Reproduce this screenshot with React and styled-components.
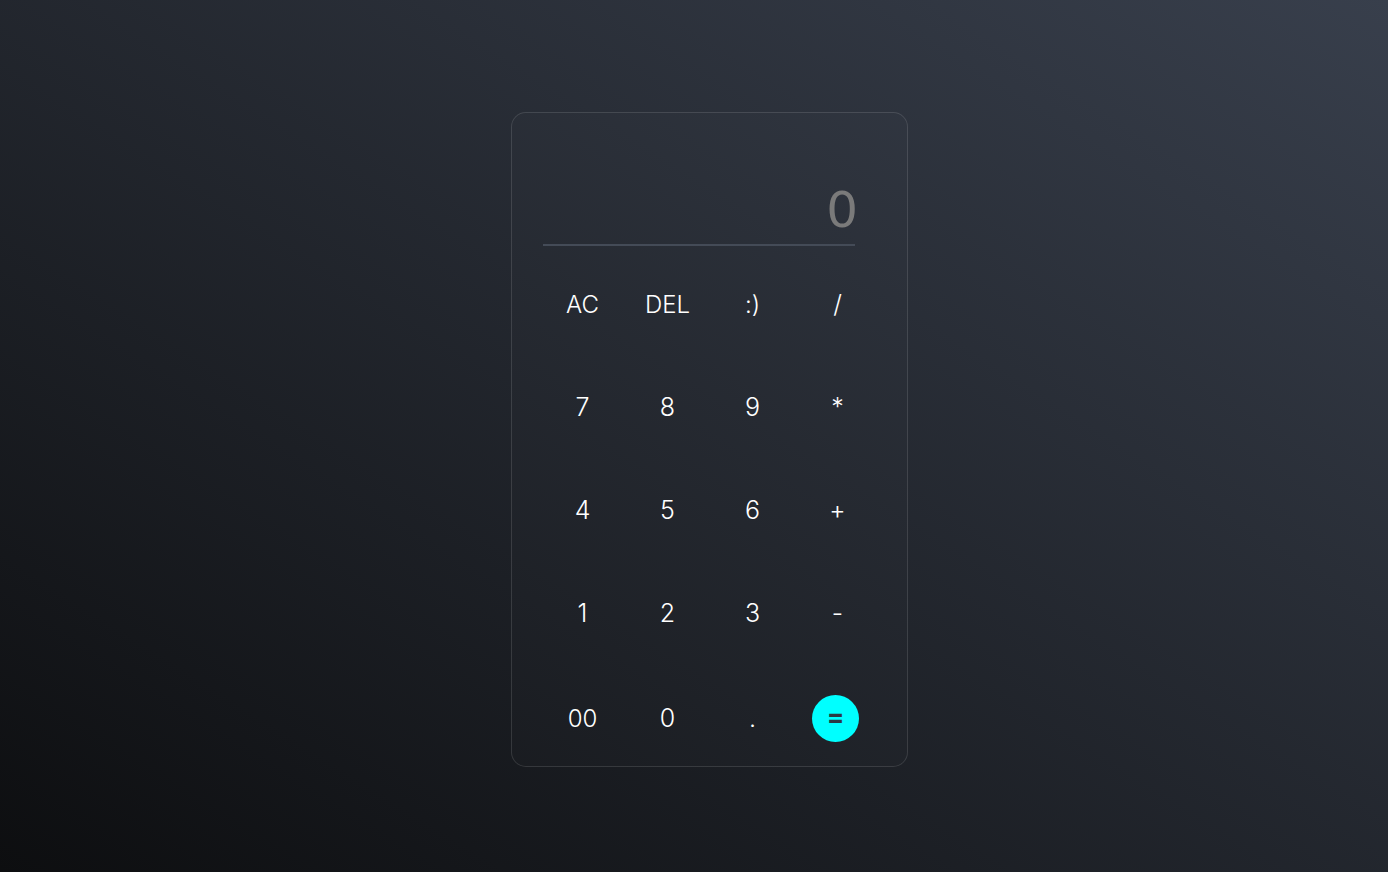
import React, { useState } from "react";
import styled, { createGlobalStyle } from "styled-components";

const GlobalStyle = createGlobalStyle`
  * {
    box-sizing: border-box;
  }
  html, body {
    margin: 0;
    padding: 0;
    height: 100%;
  }
  body {
    font-family: "Inter", "Open Sans", sans-serif;
    background: linear-gradient(to top right, #0d0e10, #383f4c);
    color: #fff;
  }
`;

const Page = styled.div`
  width: 100%;
  height: 100vh;
  display: flex;
  align-items: center;
  justify-content: center;
  padding: 7px 0 0 31px;
`;

const Card = styled.div`
  width: 397px;
  border: 1px solid rgba(255, 255, 255, 0.12);
  border-radius: 15px;
  background: rgba(255, 255, 255, 0.01);
  padding: 29px 28px 24px 28px;
`;

const Display = styled.div`
  height: 104px;
  margin: 0 24px 0 3px;
  border-bottom: 2px solid #444b57;
  display: flex;
  align-items: flex-end;
  justify-content: flex-end;
  padding-bottom: 9px;
  font-family: "DejaVu Sans", sans-serif;
  font-size: 50px;
  line-height: 1;
  color: #7a7a7a;

  span {
    margin-right: -3px;
  }
`;

const Keys = styled.div`
  margin-top: 35px;
  display: grid;
  grid-template-columns: repeat(4, 85px);
  grid-template-rows: repeat(4, 47px) 49px;
  row-gap: 56px;
`;

const Key = styled.button`
  border: none;
  background: transparent;
  color: #fff;
  font-family: "Inter", "Open Sans", sans-serif;
  font-weight: 300;
  font-size: ${(p) => (p.$small ? "24px" : "25px")};
  padding: 0 0 9px;
  display: flex;
  align-items: flex-end;
  justify-content: center;
  cursor: pointer;
`;

const EqualsKey = styled.button`
  justify-self: center;
  align-self: end;
  width: 47px;
  height: 47px;
  margin-right: 4px;
  border: none;
  border-radius: 50%;
  background: #00ffff;
  color: #2b3a44;
  font-family: "Inter", sans-serif;
  font-weight: 700;
  font-size: 26px;
  line-height: 1;
  padding: 0 0 3px;
  cursor: pointer;
`;

const keys = [
  "AC", "DEL", ":)", "/",
  "7", "8", "9", "*",
  "4", "5", "6", "+",
  "1", "2", "3", "-",
  "00", "0", ".",
];

export default function App() {
  const [value] = useState("0");

  return (
    <>
      <GlobalStyle />
      <Page>
        <Card>
          <Display>
            <span>{value}</span>
          </Display>
          <Keys>
            {keys.map((k) => (
              <Key key={k} $small={k.length > 1}>
                {k}
              </Key>
            ))}
            <EqualsKey>=</EqualsKey>
          </Keys>
        </Card>
      </Page>
    </>
  );
}
